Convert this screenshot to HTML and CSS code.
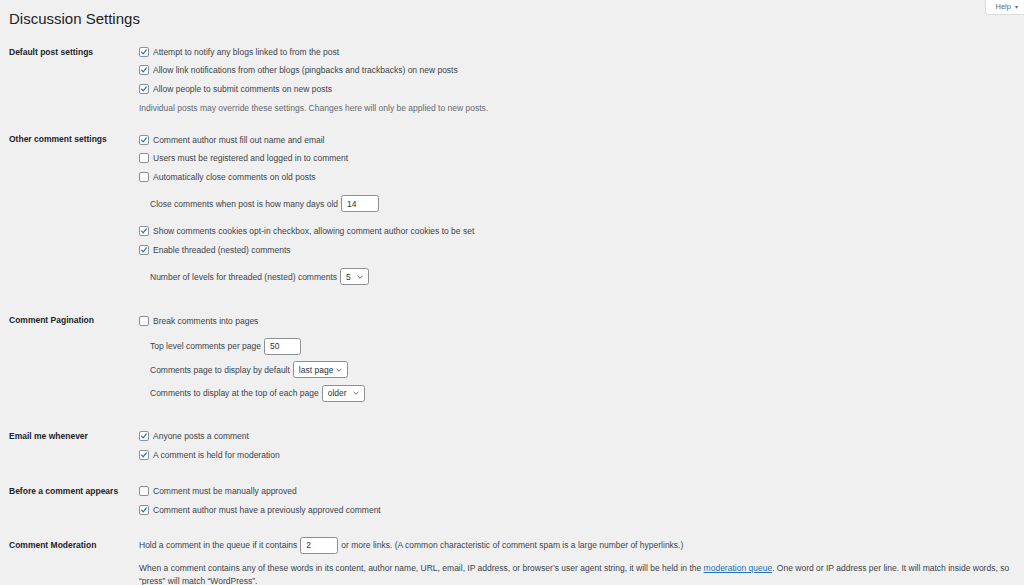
FILE: index.html
```html
<!DOCTYPE html>
<html lang="en">
<head>
<meta charset="utf-8">
<title>Discussion Settings</title>
<link rel="stylesheet" href="styles.css">
</head>
<body>
<div class="head">
  <h1>Discussion Settings</h1>
  <div class="help-tab">Help <span class="caret">&#9662;</span></div>
</div>
<div class="wrap">
  <div class="section s1">
    <div class="label">Default post settings</div>
    <div class="fields">
      <div class="row"><span class="cb on"></span>Attempt to notify any blogs linked to from the post</div>
      <div class="row"><span class="cb on"></span>Allow link notifications from other blogs (pingbacks and trackbacks) on new posts</div>
      <div class="row"><span class="cb on"></span>Allow people to submit comments on new posts</div>
      <div class="row desc">Individual posts may override these settings. Changes here will only be applied to new posts.</div>
    </div>
  </div>

  <div class="section s2">
    <div class="label">Other comment settings</div>
    <div class="fields">
      <div class="row"><span class="cb on"></span>Comment author must fill out name and email</div>
      <div class="row"><span class="cb"></span>Users must be registered and logged in to comment</div>
      <div class="row"><span class="cb"></span>Automatically close comments on old posts</div>
      <div class="row sub">Close comments when post is how many days old <span class="input">14</span></div>
      <div class="row"><span class="cb on"></span>Show comments cookies opt-in checkbox, allowing comment author cookies to be set</div>
      <div class="row"><span class="cb on"></span>Enable threaded (nested) comments</div>
      <div class="row sub">Number of levels for threaded (nested) comments <span class="select w29">5</span></div>
    </div>
  </div>

  <div class="section s3">
    <div class="label">Comment Pagination</div>
    <div class="fields">
      <div class="row"><span class="cb"></span>Break comments into pages</div>
      <div class="row psub first">Top level comments per page <span class="input w37">50</span></div>
      <div class="row psub">Comments page to display by default <span class="select w55">last page</span></div>
      <div class="row psub">Comments to display at the top of each page <span class="select w43">older</span></div>
    </div>
  </div>

  <div class="section s4">
    <div class="label">Email me whenever</div>
    <div class="fields">
      <div class="row"><span class="cb on"></span>Anyone posts a comment</div>
      <div class="row"><span class="cb on"></span>A comment is held for moderation</div>
    </div>
  </div>

  <div class="section s5">
    <div class="label">Before a comment appears</div>
    <div class="fields">
      <div class="row"><span class="cb"></span>Comment must be manually approved</div>
      <div class="row"><span class="cb on"></span>Comment author must have a previously approved comment</div>
    </div>
  </div>

  <div class="section s6">
    <div class="label">Comment Moderation</div>
    <div class="fields">
      <div class="row">Hold a comment in the queue if it contains <span class="input">2</span> or more links. (A common characteristic of comment spam is a large number of hyperlinks.)</div>
      <p class="para">When a comment contains any of these words in its content, author name, URL, email, IP address, or browser’s user agent string, it will be held in the <a href="#">moderation queue</a>. One word or IP address per line. It will match inside words, so “press” will match “WordPress”.</p>
    </div>
  </div>
</div>
</body>
</html>
```
FILE: styles.css
```css
html, body {
  margin: 0;
  padding: 0;
}
body {
  background: #f0f0f1;
  font-family: "Liberation Sans", Arial, sans-serif;
  font-size: 8.5px;
  color: #3c434a;
  overflow: hidden;
  height: 585px;
}
.head {
  display: flex;
  justify-content: space-between;
  align-items: flex-start;
  padding-left: 9px;
}
h1 {
  margin: 11px 0 0;
  font-size: 15px;
  line-height: 16px;
  font-weight: 400;
  color: #1d2327;
}
.help-tab {
  background: #fff;
  border: 1px solid #dcdcde;
  border-top: none;
  border-right: none;
  border-radius: 0 0 0 3px;
  height: 14px;
  line-height: 13px;
  padding: 0 6px 0 9px;
  font-size: 7.5px;
  color: #646970;
}
.caret {
  font-size: 6px;
  margin-left: 2px;
}
.wrap {
  padding: 0 9px;
}
.section {
  display: flex;
}
.s1 { margin-top: 15.5px; }
.s2 { margin-top: 13.6px; }
.s3 { margin-top: 17.2px; }
.s4 { margin-top: 24.2px; }
.s5 { margin-top: 17.8px; }
.s6 { margin-top: 16.8px; }
.label {
  width: 130px;
  flex: none;
  font-weight: 700;
  color: #1d2327;
  height: 18.6px;
  line-height: 18.6px;
}
.fields {
  flex: 1;
  min-width: 0;
}
.row {
  display: flex;
  align-items: center;
  height: 18.6px;
  white-space: nowrap;
}
.desc {
  color: #646970;
}
.sub {
  margin: 8.4px 0;
  padding-left: 11px;
}
.psub {
  height: 19px;
  margin-top: 4.5px;
  padding-left: 11px;
}
.psub.first {
  margin-top: 7px;
}
.cb {
  flex: none;
  width: 10px;
  height: 10px;
  box-sizing: border-box;
  border: 1px solid #8c8f94;
  border-radius: 2px;
  background: #fff;
  margin-right: 4px;
}
.cb.on {
  background: #fff url("data:image/svg+xml;utf8,<svg xmlns='http://www.w3.org/2000/svg' viewBox='0 0 10 10'><path d='M2 5.2 L4 7.2 L8 2.3' fill='none' stroke='%232271b1' stroke-width='1.5' stroke-linecap='round' stroke-linejoin='round'/></svg>") center / 8px 8px no-repeat;
}
.input, .select {
  display: inline-flex;
  align-items: center;
  box-sizing: border-box;
  height: 17px;
  background: #fff;
  border: 1px solid #8c8f94;
  border-radius: 2.5px;
  color: #2c3338;
  padding-left: 5px;
  margin: 0 3px;
  width: 38px;
}
.input.w37 { width: 37px; }
.select {
  justify-content: space-between;
  padding-right: 5px;
}
.select::after {
  content: "";
  width: 6px;
  height: 4px;
  background: url("data:image/svg+xml;utf8,<svg xmlns='http://www.w3.org/2000/svg' viewBox='0 0 6 4'><path d='M0.6 0.8 L3 3.2 L5.4 0.8' fill='none' stroke='%2350575e' stroke-width='0.9'/></svg>") center / 6px 4px no-repeat;
}
.w29 { width: 29px; }
.w55 { width: 55px; }
.w43 { width: 43px; }
.para {
  margin: 7.4px 0 0;
  line-height: 13px;
}
.para a {
  color: #2271b1;
}
```
